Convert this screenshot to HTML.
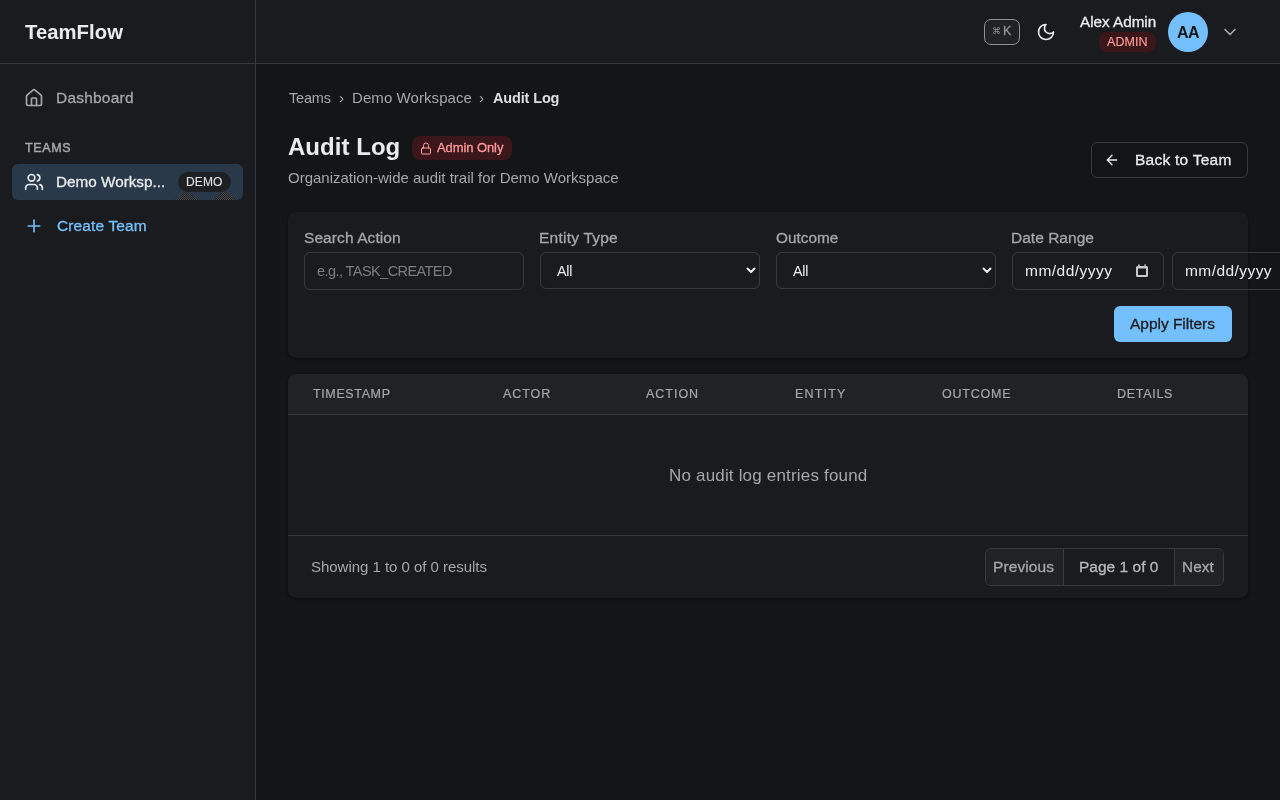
<!DOCTYPE html>
<html><head><meta charset="utf-8">
<style>
*{box-sizing:border-box;margin:0;padding:0}
html,body{width:1280px;height:800px;overflow:hidden;background:#141517;font-family:"Liberation Sans",sans-serif;color:#c1c2c5}
.abs{position:absolute}
.tx{position:absolute;white-space:nowrap;will-change:transform}

</style></head>
<body>
<!-- sidebar -->
<div class="abs" style="left:0;top:0;width:256px;height:800px;background:#1a1b1e;border-right:1px solid #373a40"></div>
<div class="abs" style="left:0;top:63px;width:256px;height:1px;background:#373a40"></div>
<svg class="abs" style="left:24px;top:88px" width="20" height="20" viewBox="0 0 24 24" fill="none" stroke="#a6a7ab" stroke-width="2" stroke-linecap="round" stroke-linejoin="round"><path d="M15 21v-8a1 1 0 0 0-1-1h-4a1 1 0 0 0-1 1v8"/><path d="M3 10a2 2 0 0 1 .709-1.528l7-5.999a2 2 0 0 1 2.582 0l7 5.999A2 2 0 0 1 21 10v9a2 2 0 0 1-2 2H5a2 2 0 0 1-2-2z"/></svg>
<div class="abs" style="left:12px;top:164px;width:231px;height:36px;border-radius:6px;background:#2a3949"></div>
<svg class="abs" style="left:24px;top:172px" width="20" height="20" viewBox="0 0 24 24" fill="none" stroke="#e9ecef" stroke-width="2" stroke-linecap="round" stroke-linejoin="round"><path d="M16 21v-2a4 4 0 0 0-4-4H6a4 4 0 0 0-4 4v2"/><circle cx="9" cy="7" r="4"/><path d="M22 21v-2a4 4 0 0 0-3-3.87"/><path d="M16 3.13a4 4 0 0 1 0 7.75"/></svg>
<div class="abs" style="left:178px;top:172px;width:53px;height:20px;border-radius:10px;background:#1f2023"></div>
<svg class="abs" style="left:24px;top:216px" width="20" height="20" viewBox="0 0 24 24" fill="none" stroke="#74c0fc" stroke-width="2" stroke-linecap="round" stroke-linejoin="round"><path d="M5 12h14"/><path d="M12 5v14"/></svg>
<!-- header -->
<div class="abs" style="left:256px;top:0;width:1024px;height:64px;background:#1a1b1e;border-bottom:1px solid #373a40"></div>
<div class="abs" style="left:984px;top:19px;width:36px;height:26px;border:1px solid #909296;border-radius:7px;background:#212226"></div>
<svg class="abs" style="left:1036px;top:22px" width="20" height="20" viewBox="0 0 24 24" fill="none" stroke="#e9ecef" stroke-width="2" stroke-linecap="round" stroke-linejoin="round"><path d="M12 3a6 6 0 0 0 9 9 9 9 0 1 1-9-9Z"/></svg>
<div class="abs" style="left:1099px;top:32px;width:57px;height:20px;border-radius:8px;background:#3b161a"></div>
<div class="abs" style="left:1168px;top:12px;width:40px;height:40px;border-radius:20px;background:#74c0fc"></div>
<svg class="abs" style="left:1220px;top:22px" width="20" height="20" viewBox="0 0 24 24" fill="none" stroke="#a6a7ab" stroke-width="2" stroke-linecap="round" stroke-linejoin="round"><path d="m6 9 6 6 6-6"/></svg>
<!-- title area -->
<div class="abs" style="left:412px;top:136px;width:100px;height:24px;border-radius:8px;background:#3b161a"></div>
<svg class="abs" style="left:420px;top:142px" width="12" height="13" viewBox="0 0 24 26" fill="none" stroke="#ff9b9b" stroke-width="2" stroke-linecap="round" stroke-linejoin="round"><rect width="18" height="12" x="3" y="12" rx="2" ry="2"/><path d="M7 12V7a5 5 0 0 1 10 0v5"/></svg>
<div class="abs" style="left:1091px;top:142px;width:157px;height:36px;border:1px solid #373a40;border-radius:6px"></div>
<svg class="abs" style="left:1104px;top:152px" width="16" height="16" viewBox="0 0 24 24" fill="none" stroke="#e9ecef" stroke-width="2" stroke-linecap="round" stroke-linejoin="round"><path d="m12 19-7-7 7-7"/><path d="M19 12H5"/></svg>
<!-- filter card -->
<div class="abs" style="left:288px;top:212px;width:960px;height:146px;background:#1a1b1e;border-radius:8px;box-shadow:0 1px 3px rgba(0,0,0,.35),0 1px 2px rgba(0,0,0,.25)"></div>
<div class="abs" style="left:304px;top:252px;width:220px;height:38px;border:1px solid #373a40;border-radius:6px"></div>
<div class="abs" style="left:540px;top:252px;width:220px;height:37px;border:1px solid #373a40;border-radius:6px"></div>
<svg class="abs" style="left:745px;top:264px" width="12" height="12" viewBox="0 0 24 24" fill="none" stroke="#e9ecef" stroke-width="4" stroke-linecap="round" stroke-linejoin="round"><path d="m5 9 7 7 7-7"/></svg>
<div class="abs" style="left:776px;top:252px;width:220px;height:37px;border:1px solid #373a40;border-radius:6px"></div>
<svg class="abs" style="left:981px;top:264px" width="12" height="12" viewBox="0 0 24 24" fill="none" stroke="#e9ecef" stroke-width="4" stroke-linecap="round" stroke-linejoin="round"><path d="m5 9 7 7 7-7"/></svg>
<div class="abs" style="left:1012px;top:252px;width:152px;height:38px;border:1px solid #373a40;border-radius:6px"></div>
<svg class="abs" style="left:1136px;top:264px" width="12" height="13" viewBox="0 0 12 13"><path fill-rule="evenodd" fill="#c8c9cc" d="M1.5 2h9a1.5 1.5 0 0 1 1.5 1.5v8a1.5 1.5 0 0 1-1.5 1.5h-9a1.5 1.5 0 0 1-1.5-1.5v-8a1.5 1.5 0 0 1 1.5-1.5zM2 4.4v6.6h8v-6.6z"/><rect x="2.2" y="0.3" width="1.4" height="2.2" fill="#c8c9cc"/><rect x="8.4" y="0.3" width="1.4" height="2.2" fill="#c8c9cc"/></svg>
<div class="abs" style="left:1172px;top:252px;width:152px;height:38px;border:1px solid #373a40;border-radius:6px"></div>
<div class="abs" style="left:1114px;top:306px;width:118px;height:36px;border-radius:6px;background:#74c0fc"></div>
<!-- table card -->
<div class="abs" style="left:288px;top:374px;width:960px;height:224px;background:#1a1b1e;border-radius:8px;overflow:hidden;box-shadow:0 1px 3px rgba(0,0,0,.35),0 1px 2px rgba(0,0,0,.25)">
  <div class="abs" style="left:0;top:0;width:960px;height:41px;background:#212226;border-bottom:1px solid #373a40"></div>
  <div class="abs" style="left:0;top:161px;width:960px;height:1px;background:#373a40"></div>
</div>
<div class="abs" style="left:985px;top:548px;width:239px;height:38px;border:1px solid #373a40;border-radius:6px;overflow:hidden">
  <div class="abs" style="left:0;top:0;width:78px;height:36px;background:#212226;border-right:1px solid #373a40"></div>
  <div class="abs" style="left:78px;top:0;width:111px;height:36px;background:#1a1b1e"></div>
  <div class="abs" style="left:188px;top:0;width:50px;height:36px;background:#212226;border-left:1px solid #373a40"></div>
</div>
<div class="abs shape" style="left:175px;top:191px;width:23px;height:9px;clip-path:polygon(0 100%,45% 0,100% 100%);background:repeating-conic-gradient(#48494c 0 25%,#1f2023 0 50%) 0 0/2px 2px"></div>
<div class="abs shape" style="left:211px;top:191px;width:26px;height:9px;clip-path:polygon(0 100%,55% 0,100% 100%);background:repeating-conic-gradient(#48494c 0 25%,#1f2023 0 50%) 0 0/2px 2px"></div>

<div id="logo" class="tx" style="left:25.0px;top:22px;font-size:20.25px;line-height:20.25px;font-weight:bold;color:#e9ecef;letter-spacing:0.056px">TeamFlow</div>
<div id="dash" class="tx" style="left:56.0px;top:90px;font-size:15.5px;line-height:15.5px;font-weight:normal;color:#a6a7ab;letter-spacing:0.214px;-webkit-text-stroke:0.3px">Dashboard</div>
<div id="teams" class="tx" style="left:25.0px;top:142px;font-size:12.5px;line-height:12.5px;font-weight:normal;color:#a6a7ab;letter-spacing:0.65px;-webkit-text-stroke:0.45px">TEAMS</div>
<div id="demo" class="tx" style="left:56.0px;top:174px;font-size:15.25px;line-height:15.25px;font-weight:normal;color:#e9ecef;letter-spacing:0.016px;-webkit-text-stroke:0.3px">Demo Worksp...</div>
<div id="demob" class="tx" style="left:186.0px;top:176px;font-size:12px;line-height:12px;font-weight:normal;color:#dee2e6;letter-spacing:0.133px;-webkit-text-stroke:0.1px">DEMO</div>
<div id="create" class="tx" style="left:57.0px;top:218px;font-size:15.5px;line-height:15.5px;font-weight:normal;color:#74c0fc;letter-spacing:0.13px;-webkit-text-stroke:0.3px">Create Team</div>
<div id="kbd1" class="tx" style="left:991.6px;top:27px;font-size:9px;line-height:9px;font-weight:normal;color:#909296;letter-spacing:0px">&#8984;</div>
<div id="kbd2" class="tx" style="left:1003px;top:25px;font-size:12.5px;line-height:12.5px;font-weight:normal;color:#909296;letter-spacing:0px;-webkit-text-stroke:0.3px">K</div>
<div id="alex" class="tx" style="left:1080px;top:14px;font-size:15.25px;line-height:15.25px;font-weight:normal;color:#e9ecef;letter-spacing:-0.012px;-webkit-text-stroke:0.3px">Alex Admin</div>
<div id="admin" class="tx" style="left:1107.0px;top:36px;font-size:12.5px;line-height:12.5px;font-weight:normal;color:#ff9b9b;letter-spacing:0.075px;-webkit-text-stroke:0.15px">ADMIN</div>
<div id="aa" class="tx" style="left:1177.0px;top:25px;font-size:16px;line-height:16px;font-weight:bold;color:#141517;letter-spacing:-0.5px">AA</div>
<div id="bc1" class="tx" style="left:289.0px;top:91px;font-size:14.5px;line-height:14.5px;font-weight:normal;color:#a6a7ab;letter-spacing:-0.175px">Teams</div>
<div id="bc2" class="tx" style="left:339.0px;top:90px;font-size:15.5px;line-height:15.5px;font-weight:normal;color:#a6a7ab;letter-spacing:0px">&#8250;</div>
<div id="bc3" class="tx" style="left:352px;top:90px;font-size:15.0px;line-height:15.0px;font-weight:normal;color:#a6a7ab;letter-spacing:0.077px">Demo Workspace</div>
<div id="bc4" class="tx" style="left:479px;top:90px;font-size:15.5px;line-height:15.5px;font-weight:normal;color:#a6a7ab;letter-spacing:0px">&#8250;</div>
<div id="bc5" class="tx" style="left:493.0px;top:91px;font-size:14.5px;line-height:14.5px;font-weight:bold;color:#dcdee1;letter-spacing:-0.15px">Audit Log</div>
<div id="title" class="tx" style="left:288.0px;top:135px;font-size:24.0px;line-height:24.0px;font-weight:bold;color:#e9ecef;letter-spacing:0.039px">Audit Log</div>
<div id="adminonly" class="tx" style="left:437.0px;top:141px;font-size:13.0px;line-height:13.0px;font-weight:normal;color:#ff9b9b;letter-spacing:-0.09px;-webkit-text-stroke:0.3px">Admin Only</div>
<div id="sub" class="tx" style="left:288px;top:170px;font-size:15.0px;line-height:15.0px;font-weight:normal;color:#a6a7ab;letter-spacing:-0.003px">Organization-wide audit trail for Demo Workspace</div>
<div id="back" class="tx" style="left:1135.0px;top:152px;font-size:15.5px;line-height:15.5px;font-weight:normal;color:#e9ecef;letter-spacing:0.246px;-webkit-text-stroke:0.3px">Back to Team</div>
<div id="l1" class="tx" style="left:304.0px;top:230px;font-size:15.5px;line-height:15.5px;font-weight:normal;color:#a6a7ab;letter-spacing:0.083px;-webkit-text-stroke:0.3px">Search Action</div>
<div id="l2" class="tx" style="left:539.0px;top:230px;font-size:15.5px;line-height:15.5px;font-weight:normal;color:#a6a7ab;letter-spacing:0.23px;-webkit-text-stroke:0.3px">Entity Type</div>
<div id="l3" class="tx" style="left:776.0px;top:230px;font-size:15.25px;line-height:15.25px;font-weight:normal;color:#a6a7ab;letter-spacing:0.051px;-webkit-text-stroke:0.3px">Outcome</div>
<div id="l4" class="tx" style="left:1011px;top:230px;font-size:15.5px;line-height:15.5px;font-weight:normal;color:#a6a7ab;letter-spacing:0.021px;-webkit-text-stroke:0.3px">Date Range</div>
<div id="ph" class="tx" style="left:317.0px;top:264px;font-size:14.5px;line-height:14.5px;font-weight:normal;color:#7c7d82;letter-spacing:-0.565px">e.g., TASK_CREATED</div>
<div id="all1" class="tx" style="left:557px;top:264px;font-size:14.25px;line-height:14.25px;font-weight:normal;color:#e9ecef;letter-spacing:-0.25px">All</div>
<div id="all2" class="tx" style="left:793px;top:264px;font-size:14.25px;line-height:14.25px;font-weight:normal;color:#e9ecef;letter-spacing:-0.25px">All</div>
<div id="dt1" class="tx" style="left:1025.0px;top:263px;font-size:15.5px;line-height:15.5px;font-weight:normal;color:#e9ecef;letter-spacing:0.489px">mm/dd/yyyy</div>
<div id="dt2" class="tx" style="left:1185px;top:263px;font-size:15.5px;line-height:15.5px;font-weight:normal;color:#e9ecef;letter-spacing:0.433px">mm/dd/yyyy</div>
<div id="apply" class="tx" style="left:1130px;top:316px;font-size:15.5px;line-height:15.5px;font-weight:normal;color:#1a1b1e;letter-spacing:-0.033px;-webkit-text-stroke:0.3px">Apply Filters</div>
<div id="th1" class="tx" style="left:313px;top:388px;font-size:12.5px;line-height:12.5px;font-weight:normal;color:#a6a7ab;letter-spacing:0.625px;-webkit-text-stroke:0.2px">TIMESTAMP</div>
<div id="th2" class="tx" style="left:503.0px;top:388px;font-size:12.5px;line-height:12.5px;font-weight:normal;color:#a6a7ab;letter-spacing:0.925px;-webkit-text-stroke:0.2px">ACTOR</div>
<div id="th3" class="tx" style="left:646.0px;top:388px;font-size:12.5px;line-height:12.5px;font-weight:normal;color:#a6a7ab;letter-spacing:0.98px;-webkit-text-stroke:0.2px">ACTION</div>
<div id="th4" class="tx" style="left:795.0px;top:388px;font-size:12.5px;line-height:12.5px;font-weight:normal;color:#a6a7ab;letter-spacing:1.2px;-webkit-text-stroke:0.2px">ENTITY</div>
<div id="th5" class="tx" style="left:942.0px;top:388px;font-size:12.5px;line-height:12.5px;font-weight:normal;color:#a6a7ab;letter-spacing:0.792px;-webkit-text-stroke:0.2px">OUTCOME</div>
<div id="th6" class="tx" style="left:1117px;top:388px;font-size:12.5px;line-height:12.5px;font-weight:normal;color:#a6a7ab;letter-spacing:0.708px;-webkit-text-stroke:0.2px">DETAILS</div>
<div id="empty" class="tx" style="left:669.0px;top:467px;font-size:17.0px;line-height:17.0px;font-weight:normal;color:#a6a7ab;letter-spacing:0.18px">No audit log entries found</div>
<div id="showing" class="tx" style="left:311.0px;top:559px;font-size:15.0px;line-height:15.0px;font-weight:normal;color:#a6a7ab;letter-spacing:-0.033px">Showing 1 to 0 of 0 results</div>
<div id="prev" class="tx" style="left:993px;top:559px;font-size:15.5px;line-height:15.5px;font-weight:normal;color:#a6a7ab;letter-spacing:0.086px;-webkit-text-stroke:0.3px">Previous</div>
<div id="page" class="tx" style="left:1079px;top:559px;font-size:15.5px;line-height:15.5px;font-weight:normal;color:#b9babe;letter-spacing:0.01px;-webkit-text-stroke:0.3px">Page 1 of 0</div>
<div id="next" class="tx" style="left:1182.0px;top:559px;font-size:15.25px;line-height:15.25px;font-weight:normal;color:#a6a7ab;letter-spacing:0.133px;-webkit-text-stroke:0.3px">Next</div>
</body></html>
